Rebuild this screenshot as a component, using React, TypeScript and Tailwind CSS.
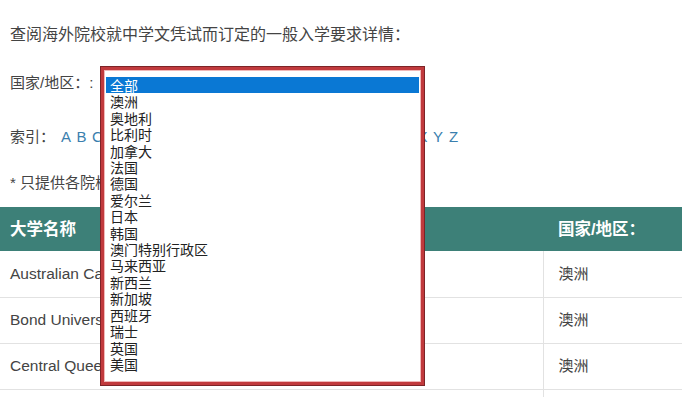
import React from "react";

const countries = [
    "全部",
    "澳洲",
    "奥地利",
    "比利时",
    "加拿大",
    "法国",
    "德国",
    "爱尔兰",
    "日本",
    "韩国",
    "澳门特别行政区",
    "马来西亚",
    "新西兰",
    "新加坡",
    "西班牙",
    "瑞士",
    "英国",
    "美国",
];

const letters = "ABCDEFGHIJKLMNOPQRSTUVWXYZ".split("");

const rows = [
    { name: "Australian Catholic University", region: "澳洲" },
    { name: "Bond University", region: "澳洲" },
    { name: "Central Queensland University", region: "澳洲" },
    { name: "Charles Darwin University", region: "澳洲" },
];

const App = () => {
    return (
        <div
            className="relative w-[685px] h-[397px] overflow-hidden bg-white text-[#444]"
            style={{ fontFamily: '"Liberation Sans", "Noto Sans CJK SC", sans-serif' }}
        >
            <div className="px-[10px] pt-[24px]">
                <p className="text-[16px] leading-[22px]">
                    查阅海外院校就中学文凭试而订定的一般入学要求详情：
                </p>
                <p className="mt-[26px] text-[15px] leading-[22px]">国家/地区：:</p>
                <div className="mt-[32px] flex items-center text-[15px] leading-[22px]">
                    <span>索引：</span>
                    <div className="flex ml-[6px] gap-[5.5px] text-[#3a7fae]">
                        {letters.map((l) => (
                            <a key={l} className="w-[10px] text-center">
                                {l}
                            </a>
                        ))}
                    </div>
                </div>
                <p className="mt-[24px] text-[15px] leading-[22px]">* 只提供各院校的一般入学要求</p>
            </div>

            <table className="mt-[13px] w-[682px] border-collapse text-left">
                <thead>
                    <tr className="bg-[#3d8078] text-white h-[44px]">
                        <th className="px-[10px] text-[16.5px] font-bold">大学名称</th>
                        <th className="w-[139px] px-[15px] text-[16.5px] font-bold">国家/地区：</th>
                    </tr>
                </thead>
                <tbody>
                    {rows.map((r) => (
                        <tr key={r.name} className="h-[46px] border-b border-[#e2e2e2]">
                            <td className="px-[10px] text-[15.5px] whitespace-nowrap">{r.name}</td>
                            <td className="px-[15px] text-[15px] border-l border-[#e2e2e2]">{r.region}</td>
                        </tr>
                    ))}
                </tbody>
            </table>

            <div className="absolute left-[101px] top-[67px] w-[323px] h-[318px] border-[3px] border-[#c13a3d] bg-white shadow-[0_0_0_1px_#7d2427,inset_0_0_0_1px_#f0b8b8]">
                <div className="pt-[7px] px-[2px] text-[14px] leading-[16.4px] text-[#222]" style={{ fontFamily: '"Noto Sans CJK SC", sans-serif' }}>
                    {countries.map((c, i) => (
                        <div
                            key={c}
                            className={
                                i === 0
                                    ? "bg-[#0a78d4] text-white pl-[4px]"
                                    : "pl-[4px]"
                            }
                        >
                            {c}
                        </div>
                    ))}
                </div>
            </div>
        </div>
    );
};

export default App;
